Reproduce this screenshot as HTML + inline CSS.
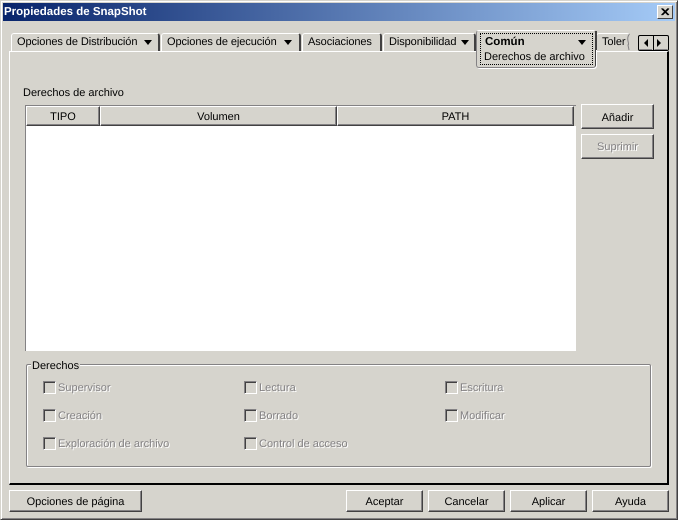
<!DOCTYPE html>
<html><head><meta charset="utf-8"><style>
html,body{margin:0;padding:0;width:678px;height:520px;overflow:hidden;background:#d6d4cd}
*{box-sizing:border-box}
body{font:11px "Liberation Sans",Arial,sans-serif;color:#000;position:relative;text-rendering:geometricPrecision}
.a{position:absolute}
.t{position:absolute;white-space:nowrap;line-height:14px}
.n{letter-spacing:-.08px}
.btn{position:absolute;background:#d6d4cd;border:1px solid;border-color:#fff #424142 #424142 #fff;box-shadow:inset -1px -1px 0 #848284;text-align:center;line-height:22px}
.hd{position:absolute;top:106px;height:20px;background:#d6d4cd;border:1px solid;border-color:#fff #424142 #424142 #fff;box-shadow:inset -1px -1px 0 #848284;text-align:center;line-height:20px}
.tab{position:absolute;top:33px;height:18px;border-top:1px solid #fff;border-left:1px solid #fff;border-right:2px solid #424142;border-top-left-radius:3px;border-top-right-radius:3px}
.arr{position:absolute;width:0;height:0;border-left:4.5px solid transparent;border-right:4.5px solid transparent;border-top:5px solid #000}
.cb{position:absolute;width:13px;height:13px;background:#d6d4cd;border:1px solid;border-color:#848284 #fff #fff #848284;box-shadow:inset 1px 1px 0 #424142}
.dis{color:#848284;text-shadow:1px 1px 0 #fff}
</style></head><body>
<div class="a" style="left:0;top:0;width:678px;height:520px;border:1px solid;border-color:#d6d4cd #424142 #424142 #d6d4cd;box-shadow:inset 1px 1px 0 #fff,inset -1px -1px 0 #848284"></div>
<div class="a" style="left:3px;top:3px;width:672px;height:18px;background:linear-gradient(90deg,#08246b,#a5cbf7)"></div>
<div class="t" style="left:4px;top:5px;color:#fff;font-weight:bold;font-size:11.5px">Propiedades de SnapShot</div>
<div class="a" style="left:657px;top:5px;width:16px;height:14px;background:#d6d4cd;border:1px solid;border-color:#fff #424142 #424142 #fff">
<svg width="14" height="12" style="display:block"><path d="M3.5 2.5L10 9M4.5 2.5L11 9M10 2.5L3.5 9M11 2.5L4.5 9" stroke="#000" stroke-width="1" fill="none"/></svg></div>

<!-- panel -->
<div class="a" style="left:9px;top:51px;width:660px;height:434px;border:1px solid;border-color:#fff #000 #000 #fff;border-width:1px 2px 2px 1px"></div>

<!-- tabs -->
<div class="tab" style="left:11px;width:149px"></div>
<div class="t n" style="left:17px;top:35px">Opciones de Distribución</div><div class="arr" style="left:144px;top:40px"></div>
<div class="tab" style="left:161px;width:140px"></div>
<div class="t n" style="left:167px;top:35px">Opciones de ejecución</div><div class="arr" style="left:284px;top:40px"></div>
<div class="tab" style="left:302px;width:80px"></div>
<div class="t n" style="left:308px;top:35px">Asociaciones</div>
<div class="tab" style="left:383px;width:93px"></div>
<div class="t n" style="left:389px;top:35px">Disponibilidad</div><div class="arr" style="left:461px;top:40px"></div>

<div class="tab" style="left:596px;width:34px;border-right:0"></div>
<div class="t n" style="left:602px;top:35px;width:24px;overflow:hidden">Tolerancia</div>
<svg class="a" style="left:626px;top:33px" width="6" height="18"><path d="M3.5 1Q1 4 2 8T2 12L3 17" stroke="#848284" fill="none"/></svg>
<div class="a" style="left:630px;top:33px;width:8px;height:18px;background:#d6d4cd"></div>

<!-- active tab -->
<div class="a" style="left:476px;top:30px;width:120px;height:38px;background:#d6d4cd;border:1px solid;border-color:#fff #424142 #848284 #848284;border-radius:3px;box-shadow:1px 1px 0 #fff"></div>
<div class="a" style="left:480px;top:33px;width:113px;height:32px;border:1px dotted #000"></div>
<div class="t" style="left:485px;top:35px;font-weight:bold;font-size:11.5px">Común</div><div class="arr" style="left:578px;top:40px"></div>
<div class="t" style="left:484px;top:50px">Derechos de archivo</div>
<div class="a" style="left:595px;top:31px;width:2px;height:19px;background:#424142"></div>

<!-- scroll -->
<div class="a" style="left:638px;top:35px;width:31px;height:16px;background:#d6d4cd;border:1px solid #000;border-radius:2px"></div>
<div class="a" style="left:653px;top:35px;width:1px;height:16px;background:#000"></div>
<svg class="a" style="left:638px;top:35px" width="31" height="16"><path d="M10 4V12L6 8Z M19 4V12L23 8Z" fill="#000"/><path d="M1.5 14.5H14M16.5 14.5H29" stroke="#848284"/></svg>

<div class="t" style="left:23px;top:86px">Derechos de archivo</div>

<!-- table -->
<div class="a" style="left:25px;top:105px;width:551px;height:246px;background:#fff;border-left:1px solid #848284;border-top:1px solid #848284"></div>
<div class="a" style="left:574px;top:106px;width:2px;height:20px;background:#d6d4cd"></div>
<div class="hd" style="left:26px;width:74px">TIPO</div>
<div class="hd" style="left:100px;width:237px">Volumen</div>
<div class="hd" style="left:337px;width:237px">PATH</div>

<div class="btn" style="left:581px;top:104px;width:73px;height:25px;line-height:26px">Añadir</div>
<div class="btn dis" style="left:581px;top:134px;width:73px;height:25px;line-height:25px">Suprimir</div>

<!-- group -->
<div class="a" style="left:26px;top:364px;width:625px;height:103px;border:1px solid #848284;box-shadow:inset 1px 1px 0 #fff,1px 1px 0 #fff;border-radius:2px"></div>
<div class="t" style="left:31px;top:359px;background:#d6d4cd;padding:0 1px">Derechos</div>

<div class="cb" style="left:43px;top:381px"></div><div class="t dis" style="left:58px;top:381px">Supervisor</div>
<div class="cb" style="left:43px;top:409px"></div><div class="t dis" style="left:58px;top:409px">Creación</div>
<div class="cb" style="left:43px;top:437px"></div><div class="t dis" style="left:58px;top:437px">Exploración de archivo</div>
<div class="cb" style="left:244px;top:381px"></div><div class="t dis" style="left:259px;top:381px">Lectura</div>
<div class="cb" style="left:244px;top:409px"></div><div class="t dis" style="left:259px;top:409px">Borrado</div>
<div class="cb" style="left:244px;top:437px"></div><div class="t dis" style="left:259px;top:437px">Control de acceso</div>
<div class="cb" style="left:445px;top:381px"></div><div class="t dis" style="left:460px;top:381px">Escritura</div>
<div class="cb" style="left:445px;top:409px"></div><div class="t dis" style="left:460px;top:409px">Modificar</div>

<!-- bottom -->
<div class="btn" style="left:9px;top:490px;width:133px;height:22px">Opciones de página</div>
<div class="btn" style="left:346px;top:490px;width:77px;height:22px">Aceptar</div>
<div class="btn" style="left:428px;top:490px;width:77px;height:22px">Cancelar</div>
<div class="btn" style="left:510px;top:490px;width:77px;height:22px">Aplicar</div>
<div class="btn" style="left:592px;top:490px;width:77px;height:22px">Ayuda</div>
</body></html>
